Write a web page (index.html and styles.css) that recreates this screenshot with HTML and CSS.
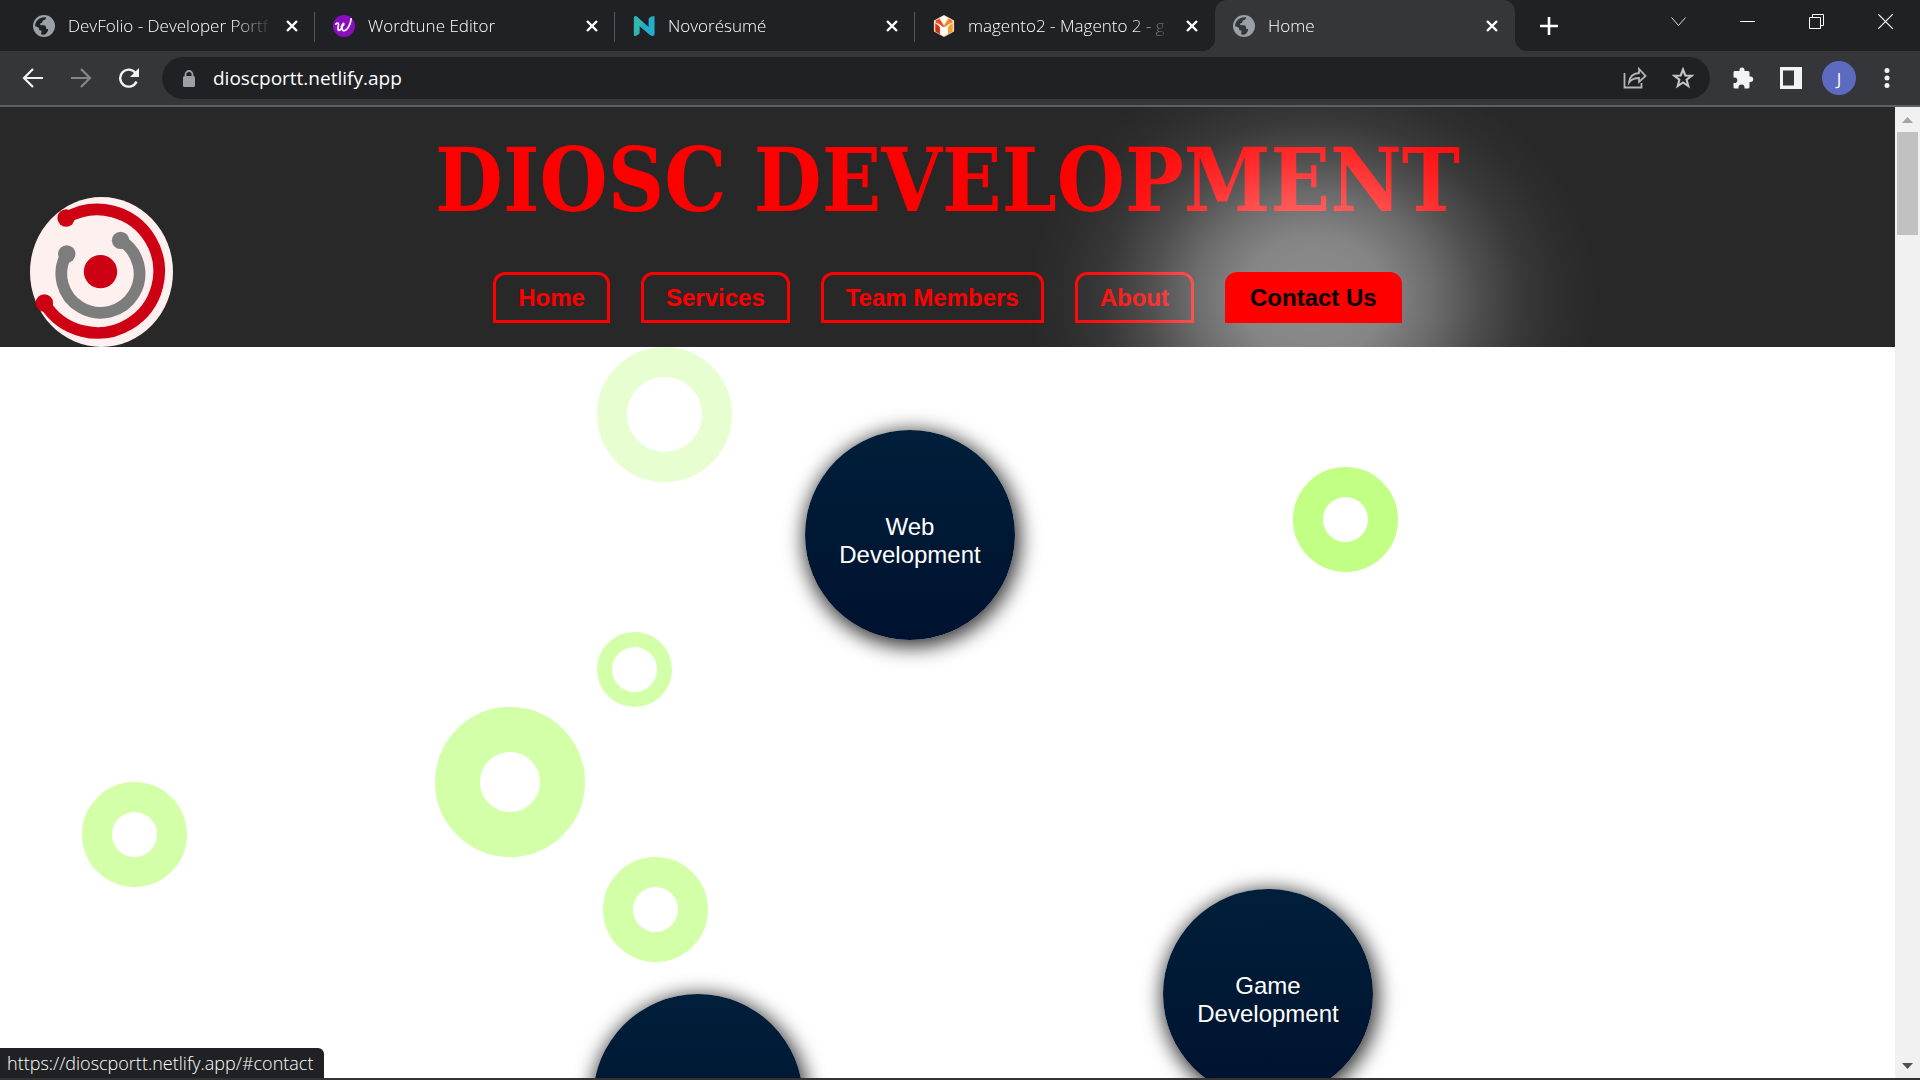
FILE: index.html
```html
<!DOCTYPE html>
<html lang="en">
<head>
<meta charset="utf-8">
<title>Home</title>
<link rel="stylesheet" href="styles.css">
</head>
<body>
<svg class="defs" aria-hidden="true">
  <symbol id="globe" viewBox="0 0 22 22"><circle cx="11" cy="11" r="11" fill="#9aa0a6"/><path d="M13 2.300c-.2 1.700-.3 2.400-1.600 2.600-1.800.2-2 .7-2 2-.1 1.400-2.400.9-2.400 2.200 0 1 .7 1.200 2.600 1.200 2.300 0 3.400.5 3.400 2.100 0 1.300.6 1.700 2 1.600.4 1.600-.8 3.900-3 5.400-1.600.5-3.200.3-4-.1.400-1.400.6-2.300.5-3.700C6 15.500 6 14.700 6 13 4.600 12 3.200 11.500 2.100 11.300 2 6.500 6 1.800 13 2.300z" fill="var(--cut)"/></symbol>
  <symbol id="cross" viewBox="0 0 12 12"><path d="M1 1l10 10M11 1L1 11" stroke="#fff" stroke-width="2.400" fill="none"/></symbol>
</svg>

<header class="tabstrip">
  <div class="tabs" role="tablist">
    <div class="tab" role="tab">
      <svg class="favicon"><use href="#globe"/></svg>
      <span class="tab-title">DevFolio - Developer Portf</span>
      <button class="tab-close" aria-label="Close tab"><svg width="12" height="12"><use href="#cross"/></svg></button>
    </div>
    <div class="tab" role="tab">
      <svg class="favicon" viewBox="0 0 24 24"><circle cx="12" cy="12" r="12" fill="#8e0cc0"/><path d="M3 10c1.500-1.800 3.200-1.800 3 .5-.2 2.500-1.500 6 .3 6.200 2 .2 3.500-3.500 4-6.700-.6 3.400-.8 7 1.200 7.200 4 .4 7.500-6.500 8.300-13M9 12.500c2 .3 4-3 2-3.500" fill="none" stroke="#fff" stroke-width="1.800" stroke-linecap="round"/></svg>
      <span class="tab-title">Wordtune Editor</span>
      <button class="tab-close" aria-label="Close tab"><svg width="12" height="12"><use href="#cross"/></svg></button>
    </div>
    <div class="tab" role="tab">
      <svg class="favicon" viewBox="0 0 24 24"><path d="M1 4c0-3 2-3.500 4-1.500L19 16c2 2 2 5 0 6L7 12v7c0 2-3 3.500-6 3.500z" fill="#2eb8b0"/><path d="M23.500 21c0 2-3 2.500-5 .5L3 8C1 6 1 3 4 2l13 11V5c0-2 3.500-4 6.500-3.500z" fill="#22aecb"/><path d="M1 4c0-3 2-3.500 4-1.500L12 9 7 12v7c0 2-3 3.500-6 3.500z" fill="#2eb8b0"/></svg>
      <span class="tab-title">Novorésumé</span>
      <button class="tab-close" aria-label="Close tab"><svg width="12" height="12"><use href="#cross"/></svg></button>
    </div>
    <div class="tab" role="tab">
      <svg class="favicon" viewBox="0 0 24 24"><path d="M12 0l11 6v12l-11 6-11-6V6z" fill="#f7d9bf"/><path d="M3 6l4-2 5 8-1 2-8-6z" fill="#f0481a"/><path d="M21 6l-4-2-5 8 1 2 8-6z" fill="#f5821f"/><path d="M2.500 9l5 4v8l-5-3z" fill="#c8330f"/><path d="M21.500 9l-5 4v8l5-3z" fill="#f9a22b"/><path d="M8 3l4-2 4 2-4 8zM4 8l8 6 8-6-4 5v7l-4 3-4-3v-7z" fill="#fff"/></svg>
      <span class="tab-title">magento2 - Magento 2 - g</span>
      <button class="tab-close" aria-label="Close tab"><svg width="12" height="12"><use href="#cross"/></svg></button>
    </div>
    <div class="tab tab-active" role="tab" aria-selected="true">
      <svg class="favicon"><use href="#globe"/></svg>
      <span class="tab-title">Home</span>
      <button class="tab-close" aria-label="Close tab"><svg width="12" height="12"><use href="#cross"/></svg></button>
    </div>
    <button class="new-tab" aria-label="New tab"><svg width="18" height="18"><path d="M9 0v18M0 9h18" stroke="#fff" stroke-width="2.600"/></svg></button>
  </div>
  <div class="window-controls">
    <button aria-label="Search tabs"><svg width="15" height="15"><path d="M.5 3.500l7 8 7-8" fill="none" stroke="#ddd"/></svg></button>
    <button aria-label="Minimize"><svg width="15" height="15"><path d="M0 7.500h15" stroke="#fff"/></svg></button>
    <button aria-label="Restore"><svg width="15" height="15"><path d="M.5 3.500h11v11H.5zM3.500 3.500v-3h11v11h-3" fill="none" stroke="#fff"/></svg></button>
    <button aria-label="Close window"><svg width="15" height="15"><path d="M0 0l15 15M15 0L0 15" stroke="#fff" stroke-width="1.200"/></svg></button>
  </div>
</header>

<div class="toolbar">
  <button class="tool" aria-label="Back"><svg width="22" height="20"><path d="M21 10H2M11 1l-9 9 9 9" fill="none" stroke="#f1f3f4" stroke-width="2.200"/></svg></button>
  <button class="tool" aria-label="Forward"><svg width="22" height="20"><path d="M1 10h19M11 1l9 9-9 9" fill="none" stroke="#85868a" stroke-width="2.200"/></svg></button>
  <button class="tool" aria-label="Reload"><svg width="22" height="20"><path d="M18.500 13.500a8.500 8.500 0 1 1-.8-8.200" fill="none" stroke="#f1f3f4" stroke-width="2.400"/><path d="M21 0v9h-9z" fill="#f1f3f4"/></svg></button>
  <div class="omnibox">
    <svg class="lock" width="12" height="17"><path d="M2.500 7V4.500a3.500 3.500 0 0 1 7 0V7" fill="none" stroke="#9aa0a6" stroke-width="1.800"/><rect y="6" width="12" height="11" rx="1.500" fill="#9aa0a6"/></svg>
    <input class="url" type="text" aria-label="Address" value="dioscportt.netlify.app">
    <button class="tool" aria-label="Share"><svg width="24" height="22"><path d="M1.500 6v14.500h17V16" fill="none" stroke="#b4b5b8" stroke-width="1.800"/><path d="M6 15.500C6.500 9.500 10 6.500 16 6V2l6.500 7-6.500 6v-4c-4.500 0-7.500 1-10 4.500z" fill="none" stroke="#b4b5b8" stroke-width="1.800"/></svg></button>
    <button class="tool" aria-label="Bookmark"><svg width="22" height="22" viewBox="0 0 22 22"><path d="M11 2.500l2.300 6 6.200.3-4.900 3.900 1.700 6.300-5.300-3.600L5.700 19l1.700-6.300-4.900-3.900 6.200-.3z" fill="none" stroke="#c4c5c7" stroke-width="2.100"/></svg></button>
  </div>
  <button class="tool" aria-label="Extensions"><svg width="22" height="22"><path d="M3 4h4.500V3a2.500 2.500 0 0 1 5 0v1H16q1.500 0 1.500 1.500v4h1a2.700 2.700 0 0 1 0 5.400h-1V20q0 1.500-1.500 1.500h-3.500v-1a3 3 0 0 0-6 0v1H3Q1.500 21.500 1.500 20v-4h1a2.800 2.800 0 0 0 0-5.600h-1v-5Q1.500 4 3 4z" fill="#f1f3f4"/></svg></button>
  <button class="tool" aria-label="Side panel"><svg width="22" height="22"><path d="M0 0h22v22H0zM3 3.500v15h11v-15z" fill="#f1f3f4" fill-rule="evenodd"/></svg></button>
  <button class="tool avatar" aria-label="Profile">J</button>
  <button class="tool" aria-label="Menu"><svg width="6" height="20"><g fill="#f1f3f4"><circle cx="3" cy="2.500" r="2.500"/><circle cx="3" cy="10" r="2.500"/><circle cx="3" cy="17.500" r="2.500"/></g></svg></button>
</div>

<div class="viewport">
  <div class="page">
    <div class="site-header">
      <svg class="logo" viewBox="90 51 428 450" preserveAspectRatio="none" role="img" aria-label="Diosc logo"><ellipse cx="304" cy="276" rx="214" ry="225" fill="#fff0f0"/><g fill="none" stroke-width="35"><path d="M198 114A185 185 0 1 1 133 369" stroke="#ce0013"/><path d="M200 222A117 117 0 1 0 361 181" stroke="#7d7d7d"/></g><g fill="#ce0013"><circle cx="198" cy="114" r="26"/><circle cx="133" cy="369" r="26"/><circle cx="301" cy="275" r="50"/></g><g fill="#7d7d7d"><circle cx="200" cy="222" r="26"/><circle cx="361" cy="181" r="26"/></g></svg>
      <h1 class="brand">DIOSC DEVELOPMENT</h1>
      <nav>
        <ul class="nav">
          <li><a href="#home">Home</a></li>
          <li><a href="#services">Services</a></li>
          <li><a href="#team">Team Members</a></li>
          <li><a href="#about">About</a></li>
          <li class="hovered"><a href="#contact">Contact Us</a></li>
        </ul>
      </nav>
    </div>
    <main class="canvas">
      <span class="ring ring-top"></span>
      <span class="ring ring-right"></span>
      <span class="ring ring-small"></span>
      <span class="ring ring-large"></span>
      <span class="ring ring-left"></span>
      <span class="ring ring-low"></span>
      <div class="service service-web">Web Development</div>
      <div class="service service-game">Game Development</div>
      <div class="service service-next"></div>
    </main>
  </div>
  <div class="scrollbar">
    <svg width="11" height="6"><path d="M5.500 0L11 6H0z" fill="#a3a3a3"/></svg>
    <div class="thumb"></div>
    <svg width="11" height="6"><path d="M5.500 6L11 0H0z" fill="#505050"/></svg>
  </div>
  <div class="status">https://dioscportt.netlify.app/#contact</div>
</div>
<div class="taskbar-edge"></div>
</body>
</html>
```
FILE: styles.css
```css
* { box-sizing: border-box; }

body {
  margin: 0;
  height: 100vh;
  display: flex;
  flex-direction: column;
  overflow: hidden;
  background: #fff;
  font-family: "Open Sans", "Noto Sans", sans-serif;
}

.defs { position: absolute; width: 0; height: 0; }

button {
  display: flex;
  align-items: center;
  justify-content: center;
  padding: 0;
  border: 0;
  background: none;
  font: inherit;
}

/* Tab strip */
.tabstrip {
  display: flex;
  justify-content: space-between;
  height: 51px;
  flex: none;
  padding-left: 15px;
  background: #202124;
}

.tabs { display: flex; flex: none; }

.tab {
  --cut: #202124;
  position: relative;
  display: flex;
  align-items: center;
  width: 300px;
  padding: 0 16px 0 18px;
  color: #fff;
}

.tab:not(.tab-active)::after {
  content: "";
  position: absolute;
  right: 0;
  top: 12px;
  width: 1px;
  height: 30px;
  background: #55565a;
}

.tab:nth-child(4)::after { display: none; }

.tab-active {
  --cut: #35363a;
  background: #35363a;
  border-radius: 12px 12px 0 0;
}

.tab-active::before {
  content: "";
  position: absolute;
  left: -12px;
  right: -12px;
  bottom: 0;
  height: 12px;
  background:
    radial-gradient(circle at 0 0, transparent 12px, #35363a 12px) left / 12px 12px no-repeat,
    radial-gradient(circle at 100% 0, transparent 12px, #35363a 12px) right / 12px 12px no-repeat;
}

.favicon { width: 22px; height: 22px; flex: none; }

.tab-title {
  flex: 1;
  margin: 0 8px 0 13px;
  white-space: nowrap;
  font-size: 17px;
  font-weight: 300;
  line-height: 24px;
  -webkit-mask-image: linear-gradient(to right, #000 78%, transparent 98%);
  mask-image: linear-gradient(to right, #000 78%, transparent 98%);
}

.tab-close { width: 14px; height: 24px; }
.new-tab { width: 68px; }

.window-controls { display: flex; }
.window-controls button { width: 69px; height: 43px; }

/* Toolbar */
.toolbar {
  display: flex;
  align-items: center;
  height: 56px;
  flex: none;
  padding: 0 9px;
  border-bottom: 2px solid #5f6064;
  background: #35363a;
}

.tool { width: 48px; height: 48px; flex: none; }

.omnibox {
  display: flex;
  flex: 1;
  align-items: center;
  height: 42px;
  margin: 0 9px;
  padding: 0 3px 0 21px;
  border-radius: 21px;
  background: #202124;
}

.url {
  flex: 1;
  margin: 0 0 0 18px;
  padding: 0;
  border: 0;
  outline: 0;
  background: none;
  color: #fff;
  font: 19px/28px "Open Sans", "Noto Sans", sans-serif;
}

.avatar {
  width: 34px;
  height: 34px;
  margin: 0 7px;
  border-radius: 50%;
  background: #5c6bc0;
  color: #fff;
  font-size: 17px;
}

/* Browser viewport */
.viewport {
  position: relative;
  display: flex;
  flex: 1;
  min-height: 0;
}

.page {
  display: flex;
  flex: 1;
  flex-direction: column;
  min-width: 0;
  overflow: hidden;
  font-family: "Liberation Sans", Arial, sans-serif;
}

.scrollbar {
  display: flex;
  flex-direction: column;
  align-items: center;
  width: 25px;
  padding: 10px 0 9px;
  background: #f1f1f1;
}

.thumb {
  width: 21px;
  height: 103px;
  margin: 9px 0 auto;
  background: #c1c1c1;
}

.status {
  position: absolute;
  left: 0;
  bottom: 0;
  padding: 3px 11px 3px 7px;
  border-radius: 0 6px 0 0;
  background: #202124;
  color: #fff;
  font-size: 18px;
  font-weight: 300;
  line-height: 24px;
}

.taskbar-edge { height: 2px; flex: none; background: #333; }

/* Site header */
.site-header {
  position: relative;
  height: 240px;
  flex: none;
  overflow: hidden;
  background: #282828;
  text-align: center;
}

.logo {
  position: absolute;
  left: 30px;
  bottom: 0;
  width: 143px;
  height: 150px;
}

.brand {
  margin: 0;
  padding-top: 24px;
  color: #f00;
  font: bold 87px/100px "DejaVu Serif Condensed", "DejaVu Serif", serif;
  white-space: nowrap;
}

.nav {
  display: flex;
  justify-content: center;
  gap: 31px;
  margin: 0;
  padding: 41px 0 0;
  list-style: none;
}

.nav a {
  display: block;
  padding: 9px 22px;
  border: 3px solid #f00;
  border-radius: 12px 12px 0 0;
  color: #f00;
  font-size: 24px;
  font-weight: bold;
  line-height: 27px;
  text-decoration: none;
}

.hovered { position: relative; }

.nav .hovered a {
  position: relative;
  background: #f00;
  color: #000;
}

/* Soft light behind the hovered link, over its neighbours */
.hovered::before {
  content: "";
  position: absolute;
  inset: -220px -200px;
  background: radial-gradient(closest-side,
    #ffffff78 0%, #ffffff6e 25%, #ffffff50 42%, #ffffff2e 57%,
    #ffffff14 72%, #ffffff07 86%, #ffffff00 100%);
  pointer-events: none;
}

/* Bubble canvas */
.canvas {
  position: relative;
  flex: 1;
  overflow: hidden;
  background: #fff;
}

.ring {
  position: absolute;
  width: 105px;
  height: 105px;
  border: 30px solid #d2ffa8;
  border-radius: 50%;
}

.ring-top { left: 597px; top: 0; width: 135px; height: 135px; border-color: #e7ffd0; }
.ring-right { left: 1293px; top: 120px; border-color: #c2ff85; }
.ring-small { left: 597px; top: 285px; width: 75px; height: 75px; border-width: 15px; }
.ring-large { left: 435px; top: 360px; width: 150px; height: 150px; border-width: 45px; }
.ring-left { left: 82px; top: 435px; }
.ring-low { left: 603px; top: 510px; }

.service {
  position: absolute;
  display: flex;
  align-items: center;
  justify-content: center;
  width: 210px;
  height: 210px;
  padding: 12px 30px 0;
  border-radius: 50%;
  background: linear-gradient(#001f3a, #00122f);
  box-shadow: 2px 4px 20px 3px #000c;
  color: #fff;
  font-size: 24px;
  line-height: 28px;
  text-align: center;
}

.service-web { left: 805px; top: 83px; }
.service-game { left: 1163px; top: 542px; }
.service-next { left: 593px; top: 647px; }
```
